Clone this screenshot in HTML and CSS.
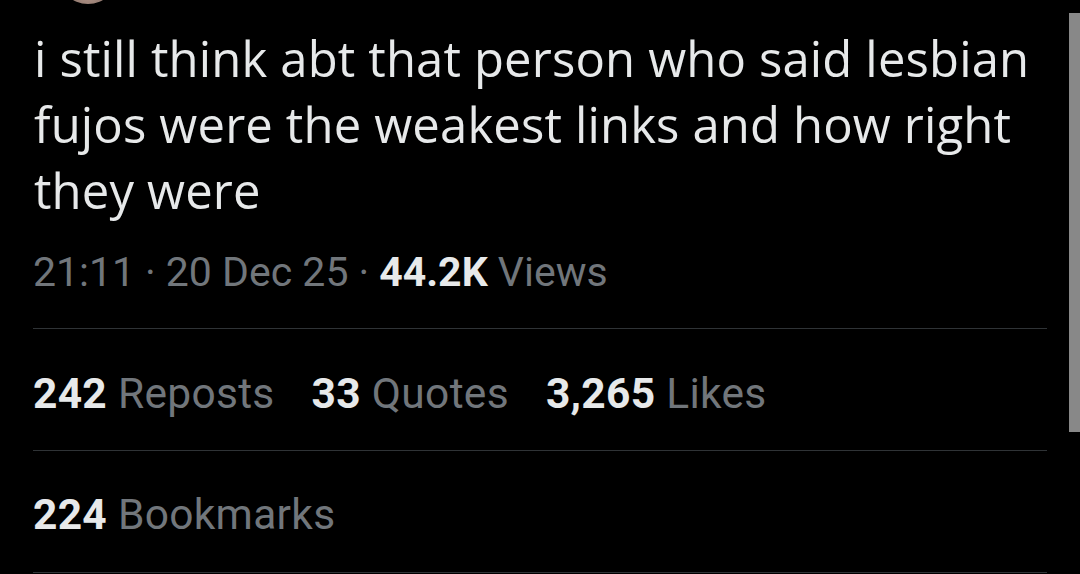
FILE: index.html
```html
<!DOCTYPE html>
<html lang="en">
<head>
  <meta charset="UTF-8" />
  <meta name="viewport" content="width=device-width, initial-scale=1.0"/>
  <title>Post</title>
  <link rel="stylesheet" href="styles.css">
</head>
<body>
  <!-- avatar cut off at the top of the screen -->
  <div class="avatar"></div>

  <div class="scrollbar"></div>

  <main class="post">
    <p class="post-text">i still think abt that person who said lesbian fujos were the weakest links and how right they were</p>

    <div class="post-meta">
      <span>21:11</span>
      <span class="dot">·</span>
      <span>20 Dec 25</span>
      <span class="dot">·</span>
      <span><b>44.2K</b> Views</span>
    </div>

    <div class="post-stats">
      <span class="stat"><b>242</b> Reposts</span>
      <span class="stat"><b>33</b> Quotes</span>
      <span class="stat"><b>3,265</b> Likes</span>
    </div>

    <div class="post-stats">
      <span class="stat"><b>224</b> Bookmarks</span>
    </div>
  </main>
</body>
</html>
```

FILE: styles.css
```css
* {
  box-sizing: border-box;
  margin: 0;
  padding: 0;
}

html, body {
  height: 100%;
  background: #000;
  overflow: hidden;
}

body {
  position: relative;
  font-family: 'Roboto', 'Liberation Sans', sans-serif;
  color: #e7e9ea;
}

.avatar {
  position: absolute;
  top: -56px;
  left: 58px;
  width: 60px;
  height: 60px;
  border-radius: 50%;
  background: radial-gradient(circle at 50% 80%, #b89a8c, #6d5a55 60%, #3a3030);
}

.scrollbar {
  position: absolute;
  top: 13px;
  right: 0;
  width: 11px;
  height: 419px;
  background: #888;
}

.post {
  width: 1047px;
  padding: 25px 0 0 33px;
}

.post-text {
  font-family: 'Open Sans', 'Noto Sans', sans-serif;
  font-size: 49px;
  line-height: 66px;
  letter-spacing: 0.15px;
  color: #e7e9ea;
  padding-left: 1px;
}

.post-meta {
  display: flex;
  gap: 10px;
  padding: 25px 0 32px;
  font-size: 41px;
  line-height: 48px;
  color: #71767b;
  border-bottom: 1px solid #2f3336;
}

.post-meta b,
.post-stats b {
  color: #e7e9ea;
  font-weight: 700;
}

.post-stats {
  display: flex;
  gap: 37px;
  padding: 41px 0 32px;
  font-size: 42.5px;
  line-height: 48px;
  letter-spacing: 0.3px;
  color: #71767b;
  border-bottom: 1px solid #2f3336;
}

.post-stats:last-child {
  padding: 40px 0 33px;
}
```
